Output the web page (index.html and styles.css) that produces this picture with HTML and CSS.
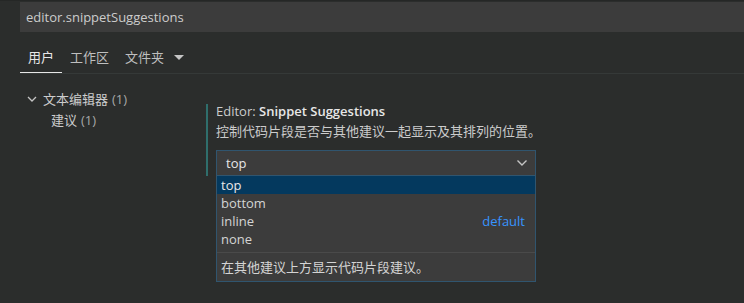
FILE: index.html
```html
<!DOCTYPE html>
<html lang="zh-CN">
<head>
<meta charset="utf-8">
<link rel="stylesheet" href="styles.css">
</head>
<body>
<div class="search">editor.snippetSuggestions</div>
<div class="tabs">
  <div class="tab active">用户</div>
  <div class="tab">工作区</div>
  <div class="tab">文件夹 <svg class="caret" width="10" height="6" viewBox="0 0 10 6"><path d="M0 0h10L5 5z" fill="#c5c5c5"/></svg></div>
</div>
<div class="main">
  <div class="tree">
    <div class="node">
      <svg class="chev" width="10" height="7" viewBox="0 0 10 7"><path d="M1 1l4 4 4-4" fill="none" stroke="#c5c5c5" stroke-width="1.3"/></svg>
      <span>文本编辑器</span> <span class="count">(1)</span>
    </div>
    <div class="node child"><span>建议</span> <span class="count">(1)</span></div>
  </div>
  <div class="setting">
    <div class="title">Editor: <b>Snippet Suggestions</b></div>
    <div class="desc">控制代码片段是否与其他建议一起显示及其排列的位置。</div>
    <div class="select-wrap">
      <div class="select">
        <div class="value">top</div>
        <svg class="sel-chev" width="12" height="8" viewBox="0 0 12 8"><path d="M1.5 1.5l4.5 4.5 4.5-4.5" fill="none" stroke="#c5c5c5" stroke-width="1.4"/></svg>
      </div>
      <div class="dropdown">
        <div class="opt selected">top</div>
        <div class="opt">bottom</div>
        <div class="opt"><span>inline</span><span class="def">default</span></div>
        <div class="opt">none</div>
        <div class="opt-desc">在其他建议上方显示代码片段建议。</div>
      </div>
    </div>
  </div>
</div>
</body>
</html>
```
FILE: styles.css
```css
html, body {
  margin: 0;
  padding: 0;
}
body {
  background: #2b2d2c;
  color: #cccccc;
  font-family: "Open Sans", "Noto Sans CJK SC", sans-serif;
  font-size: 13px;
  width: 744px;
  height: 303px;
  overflow: hidden;
  border-top: 1px solid #252726;
}
.search {
  margin-left: 20px;
  margin-top: 1px;
  height: 30px;
  line-height: 30px;
  background: #3c3c3c;
  padding-left: 6px;
  color: #cccccc;
}
.tabs {
  display: flex;
  align-items: center;
  margin-top: 10px;
  margin-left: 20px;
  height: 31px;
  border-bottom: 1px solid #353938;
}
.tab {
  height: 31px;
  line-height: 31px;
  padding: 0 8px;
  color: #bfbfbf;
  box-sizing: border-box;
  display: flex;
  align-items: center;
}
.tab.active {
  color: #e7e7e7;
  border-bottom: 1px solid #e7e7e7;
  padding-top: 1px;
}
.caret {
  margin-left: 10px;
}
.main {
  display: flex;
  align-items: flex-start;
  padding-top: 15px;
}
.tree {
  width: 206px;
  flex: none;
  padding-left: 27px;
  box-sizing: border-box;
  color: #cccccc;
}
.node {
  height: 20px;
  line-height: 20px;
  display: flex;
  align-items: center;
  gap: 4px;
}
.chev {
  margin-right: 2px;
}
.node.child {
  padding-left: 24px;
  margin-top: 1px;
}
.count {
  color: #a8a8a8;
}
.setting {
  margin-top: 15px;
  border-left: 2px solid #2f6e6c;
  padding-left: 8px;
  width: 322px;
  flex: none;
}
.title {
  line-height: 16px;
  margin-top: -1px;
  color: #cccccc;
  white-space: nowrap;
}
.title b {
  color: #e7e7e7;
  font-weight: 600;
}
.desc {
  line-height: 20px;
  margin-top: 2px;
  color: #cccccc;
  white-space: nowrap;
}
.select-wrap {
  position: relative;
  margin-top: 9px;
  width: 320px;
}
.select {
  height: 26px;
  box-sizing: border-box;
  border: 1px solid #30556f;
  background: #3c3c3c;
  display: flex;
  align-items: center;
  justify-content: space-between;
  padding: 0 7px 0 9px;
}
.value {
  color: #e7e7e7;
}
.dropdown {
  position: absolute;
  top: 26px;
  left: 0;
  width: 320px;
  background: #3c3c3c;
  border: 1px solid #30556f;
  border-top: none;
  box-sizing: border-box;
  padding-bottom: 4px;
}
.opt {
  height: 18px;
  line-height: 18px;
  padding: 0 10px 0 4px;
  display: flex;
  justify-content: space-between;
  color: #d4d4d4;
}
.opt.selected {
  background: #04395e;
  color: #e7e7e7;
}
.def {
  color: #3794ff;
}
.opt-desc {
  margin-top: 4px;
  border-top: 1px solid #4a4a4a;
  padding: 4px 4px 0;
  line-height: 20px;
  color: #d4d4d4;
  white-space: nowrap;
}
```
